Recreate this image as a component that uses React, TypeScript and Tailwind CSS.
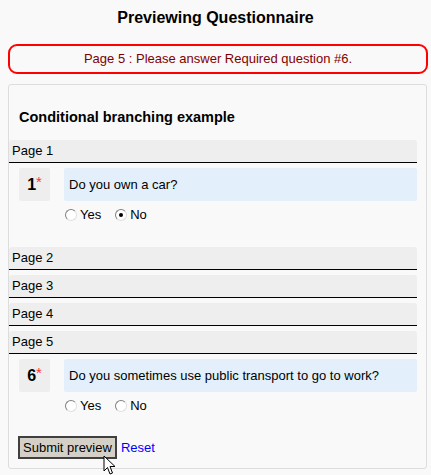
import React from 'react';

const Radio: React.FC<{ checked?: boolean }> = ({ checked }) => (
  <span className="relative inline-block w-[12px] h-[12px] rounded-full bg-white border border-t-[#808080] border-l-[#808080] border-b-[#e0e0e0] border-r-[#e0e0e0] mr-[3px]">
    {checked && <span className="absolute left-[3px] top-[3px] w-[4px] h-[4px] rounded-full bg-black" />}
  </span>
);

const PageBar: React.FC<{ label: string }> = ({ label }) => (
  <div className="h-[23px] bg-[#eeeeee] rounded-t-[3px] border-b border-black pl-[3px] text-[13px] leading-[22px] text-black">
    {label}
  </div>
);

const Question: React.FC<{ num: number; text: string; answer?: 'yes' | 'no' }> = ({ num, text, answer }) => (
  <div className="mt-[5px]">
    <div className="flex">
      <div className="ml-[10px] w-[31px] h-[33px] bg-[#eeeeee] rounded-[2px] flex items-center justify-center text-[16px] font-bold text-black">
        {num}
        <span className="text-[#ff3333] font-normal text-[15px] -mt-[4px]">*</span>
      </div>
      <div className="ml-[14px] flex-1 h-[33px] bg-[#e3f0fb] rounded-[2px] pl-[5px] flex items-center text-[13px] text-black">
        {text}
      </div>
    </div>
    <div className="ml-[56px] mt-[4px] h-[20px] flex items-center text-[13px] text-black">
      <Radio checked={answer === 'yes'} />
      <span className="mr-[14px]">Yes</span>
      <Radio checked={answer === 'no'} />
      <span>No</span>
    </div>
  </div>
);

export default function App() {
  return (
    <div className="w-[431px] h-[475px] overflow-hidden bg-[#f9f9f9] font-['Liberation_Sans',Arial,sans-serif]">
      <h2 className="pt-[8px] text-center text-[16px] leading-[19px] font-bold text-black">Previewing Questionnaire</h2>

      <div className="mt-[17px] ml-[8px] mr-[3px] h-[30px] border-2 border-[#ff0000] rounded-[9px] flex items-center justify-center text-[13px] text-[#800000]">
        Page 5 : Please answer Required question #6.
      </div>

      <div className="relative mt-[10px] ml-[8px] mr-[4px] h-[385px] border border-[#dddddd] rounded-[3px] pr-[9px]">
        <h3 className="pt-[24px] pl-[10px] text-[14.5px] leading-[17px] font-bold text-black">Conditional branching example</h3>

        <div className="mt-[14px]">
          <PageBar label="Page 1" />
          <Question num={1} text="Do you own a car?" answer="no" />
        </div>

        <div className="mt-[22px] flex flex-col gap-[5px]">
          <PageBar label="Page 2" />
          <PageBar label="Page 3" />
          <PageBar label="Page 4" />
          <PageBar label="Page 5" />
        </div>
        <Question num={6} text="Do you sometimes use public transport to go to work?" />

        <div className="mt-[20px] ml-[9px] flex items-center text-[13px]">
          <button className="h-[23px] px-[3px] bg-[#d4d0c8] border-2 border-[#404040] text-black text-[13px] leading-[17px]">
            Submit preview
          </button>
          <a className="ml-[4px] text-[#0000ff]">Reset</a>
        </div>

        <svg className="absolute left-[94px] top-[370px]" width="13" height="21" viewBox="0 0 13 21">
          <path d="M1 1 L1 16 L4.5 12.5 L7 19 L9.5 18 L7 11.5 L12 11.5 Z" fill="white" stroke="black" strokeWidth="1" strokeLinejoin="miter" />
        </svg>
      </div>
    </div>
  );
}
